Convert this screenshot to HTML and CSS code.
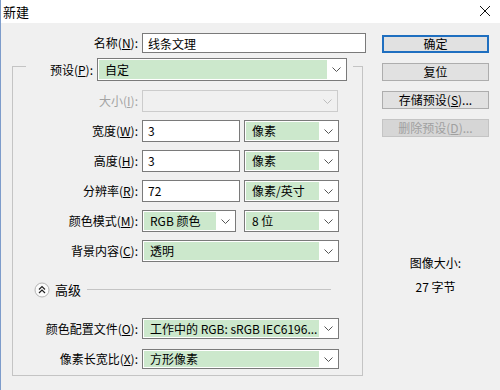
FILE: index.html
```html
<!DOCTYPE html>
<html lang="zh-CN">
<head>
  <meta charset="UTF-8" />
  <title>新建</title>
  <link rel="stylesheet" href="styles.css">
</head>
<body>
  <div class="window">
    <div class="titlebar">
      <span class="title">新建</span>
      <svg class="close" width="12" height="12" viewBox="0 0 12 12">
        <path d="M1 1 L11 11 M11 1 L1 11" stroke="#111" stroke-width="1" fill="none"/>
      </svg>
    </div>

    <div class="content">
      <div class="form">
        <div class="row name-row">
          <label class="lbl">名称(<u>N</u>):</label>
          <div class="input w-name">线条文理</div>
        </div>

        <div class="group">
          <div class="preset-row">
            <label class="lbl lbl-preset">预设(<u>P</u>):</label>
            <div class="select w-preset"><span class="val">自定</span><span class="arrow"><svg width="9" height="5" viewBox="0 0 9 5"><path d="M0.5 0.5 L4.5 4.5 L8.5 0.5" stroke="#555" fill="none"/></svg></span></div>
          </div>

          <div class="row r-size">
            <label class="lbl disabled">大小(<u>I</u>):</label>
            <div class="select off w-size"><span class="val"></span><span class="arrow"><svg width="9" height="5" viewBox="0 0 9 5"><path d="M0.5 0.5 L4.5 4.5 L8.5 0.5" stroke="#bdbdbd" fill="none"/></svg></span></div>
          </div>

          <div class="row">
            <label class="lbl">宽度(<u>W</u>):</label>
            <div class="input w-num">3</div>
            <div class="select w-unit"><span class="val">像素</span><span class="arrow"><svg width="9" height="5" viewBox="0 0 9 5"><path d="M0.5 0.5 L4.5 4.5 L8.5 0.5" stroke="#555" fill="none"/></svg></span></div>
          </div>

          <div class="row">
            <label class="lbl">高度(<u>H</u>):</label>
            <div class="input w-num">3</div>
            <div class="select w-unit"><span class="val">像素</span><span class="arrow"><svg width="9" height="5" viewBox="0 0 9 5"><path d="M0.5 0.5 L4.5 4.5 L8.5 0.5" stroke="#555" fill="none"/></svg></span></div>
          </div>

          <div class="row">
            <label class="lbl">分辨率(<u>R</u>):</label>
            <div class="input w-num">72</div>
            <div class="select w-unit"><span class="val">像素/英寸</span><span class="arrow"><svg width="9" height="5" viewBox="0 0 9 5"><path d="M0.5 0.5 L4.5 4.5 L8.5 0.5" stroke="#555" fill="none"/></svg></span></div>
          </div>

          <div class="row">
            <label class="lbl">颜色模式(<u>M</u>):</label>
            <div class="select w-mode"><span class="val">RGB 颜色</span><span class="arrow"><svg width="9" height="5" viewBox="0 0 9 5"><path d="M0.5 0.5 L4.5 4.5 L8.5 0.5" stroke="#555" fill="none"/></svg></span></div>
            <div class="select w-unit gap8"><span class="val">8 位</span><span class="arrow"><svg width="9" height="5" viewBox="0 0 9 5"><path d="M0.5 0.5 L4.5 4.5 L8.5 0.5" stroke="#555" fill="none"/></svg></span></div>
          </div>

          <div class="row">
            <label class="lbl">背景内容(<u>C</u>):</label>
            <div class="select w-wide"><span class="val">透明</span><span class="arrow"><svg width="9" height="5" viewBox="0 0 9 5"><path d="M0.5 0.5 L4.5 4.5 L8.5 0.5" stroke="#555" fill="none"/></svg></span></div>
          </div>

          <div class="advanced">
            <svg class="adv-icon" width="16" height="16" viewBox="0 0 16 16">
              <circle cx="8" cy="8" r="7" fill="#fbfbfb" stroke="#b4b4b4"/>
              <path d="M5 7.5 L8 4.5 L11 7.5 M5 11 L8 8 L11 11" stroke="#222" stroke-width="1.2" fill="none"/>
            </svg>
            <span class="adv-text">高级</span>
            <span class="adv-line"></span>
          </div>

          <div class="row r-profile">
            <label class="lbl">颜色配置文件(<u>O</u>):</label>
            <div class="select w-wide"><span class="val">工作中的 RGB: sRGB IEC6196...</span><span class="arrow"><svg width="9" height="5" viewBox="0 0 9 5"><path d="M0.5 0.5 L4.5 4.5 L8.5 0.5" stroke="#555" fill="none"/></svg></span></div>
          </div>

          <div class="row r-aspect">
            <label class="lbl">像素长宽比(<u>X</u>):</label>
            <div class="select w-wide"><span class="val">方形像素</span><span class="arrow"><svg width="9" height="5" viewBox="0 0 9 5"><path d="M0.5 0.5 L4.5 4.5 L8.5 0.5" stroke="#555" fill="none"/></svg></span></div>
          </div>
        </div>
      </div>

      <div class="side">
        <button class="btn default">确定</button>
        <button class="btn">复位</button>
        <button class="btn">存储预设(<u>S</u>)...</button>
        <button class="btn" disabled>删除预设(<u>D</u>)...</button>
        <div class="info">
          <p>图像大小:</p>
          <p class="size">27 字节</p>
        </div>
      </div>
    </div>
  </div>
</body>
</html>
```

FILE: styles.css
```css
body {
  margin: 0;
  font-family: "Noto Sans CJK SC", sans-serif;
  font-size: 12px;
  color: #000;
  background: #f0f0f0;
}
.window {
  width: 499px;
  height: 390px;
  border-left: 1px solid #7d9ccb;
  background: #f0f0f0;
  overflow: hidden;
}
.titlebar {
  height: 23px;
  background: #fff;
  display: flex;
  align-items: center;
  justify-content: space-between;
  padding: 0 9px 0 2px;
}
.title {
  font-size: 13px;
  line-height: 16px;
}
.close {
  margin-top: -1px;
}
.content {
  display: flex;
}
.form {
  padding: 10px 0 0 11px;
  width: 355px;
}
.row {
  display: flex;
  align-items: stretch;
  height: 22px;
  margin-top: 8px;
}
.lbl {
  width: 125px;
  margin-right: 4px;
  text-align: right;
  line-height: 22px;
  white-space: nowrap;
}
.lbl.disabled {
  color: #a3a3a3;
}
.name-row {
  margin-top: 0;
  height: 20px;
}
.name-row .lbl {
  width: 126px;
  line-height: 20px;
}
.input {
  box-sizing: border-box;
  border: 1px solid #7a7a7a;
  background: #fff;
  padding-left: 5px;
  line-height: 19px;
}
.w-name { width: 224px; }
.w-num { width: 98px; }

.select {
  box-sizing: border-box;
  display: flex;
  border: 1px solid #7a7a7a;
  background: #fff;
  padding: 1px;
}
.select .val {
  flex: 1;
  background: #cce8cc;
  padding-left: 6px;
  line-height: 18px;
  white-space: nowrap;
  overflow: hidden;
}
.select .arrow {
  width: 18px;
  display: flex;
  align-items: center;
  justify-content: center;
}
.select.off {
  border-color: #cccccc;
  background: #f0f0f0;
}
.select.off .val {
  background: #f0f0f0;
}
.w-unit { width: 95px; margin-left: 4px; }
.w-unit.gap8 { margin-left: 8px; }
.w-size { width: 196px; }
.w-mode { width: 94px; }
.w-wide { width: 197px; }

.group {
  box-sizing: border-box;
  width: 351px;
  margin-top: 13px;
  border: 1px solid #c4c4c4;
  padding-bottom: 6px;
}
.preset-row {
  display: flex;
  height: 23px;
  width: 327px;
  margin: -9px 0 0 13px;
  background: #f0f0f0;
}
.lbl-preset {
  width: 67px;
  line-height: 23px;
}
.w-preset {
  width: 250px;
}
.w-preset .val {
  line-height: 19px;
}
.r-size {
  margin-top: 9px;
}
.advanced {
  display: flex;
  align-items: center;
  height: 15px;
  margin-top: 20px;
  padding-left: 21px;
}
.adv-text {
  margin-left: 5px;
  font-size: 13px;
}
.adv-line {
  width: 244px;
  margin-left: 6px;
  border-top: 1px solid #c4c4c4;
}
.r-profile {
  margin-top: 21px;
  height: 21px;
}
.r-aspect {
  margin-top: 10px;
  height: 20px;
}
.r-profile .lbl { line-height: 21px; }
.r-aspect .lbl { line-height: 20px; }
.r-profile .val { line-height: 17px; }
.r-aspect .val { line-height: 16px; }

.side {
  margin-left: 15px;
  padding-top: 12px;
  width: 107px;
  display: flex;
  flex-direction: column;
  gap: 10px;
}
.btn {
  box-sizing: border-box;
  height: 18px;
  width: 107px;
  padding: 0;
  font-family: inherit;
  font-size: 12px;
  line-height: 16px;
  color: #000;
  background: #e1e1e1;
  border: 1px solid #adadad;
}
.btn.default {
  border: 2px solid #1f6fc0;
  line-height: 14px;
}
.btn:disabled {
  color: #a0a0a0;
  background: #d6d6d6;
  border-color: #c4c4c4;
}
.info {
  margin-top: 108px;
  text-align: center;
  line-height: 16px;
}
.info p {
  margin: 0;
}
.info .size {
  margin-top: 8px;
}
```
